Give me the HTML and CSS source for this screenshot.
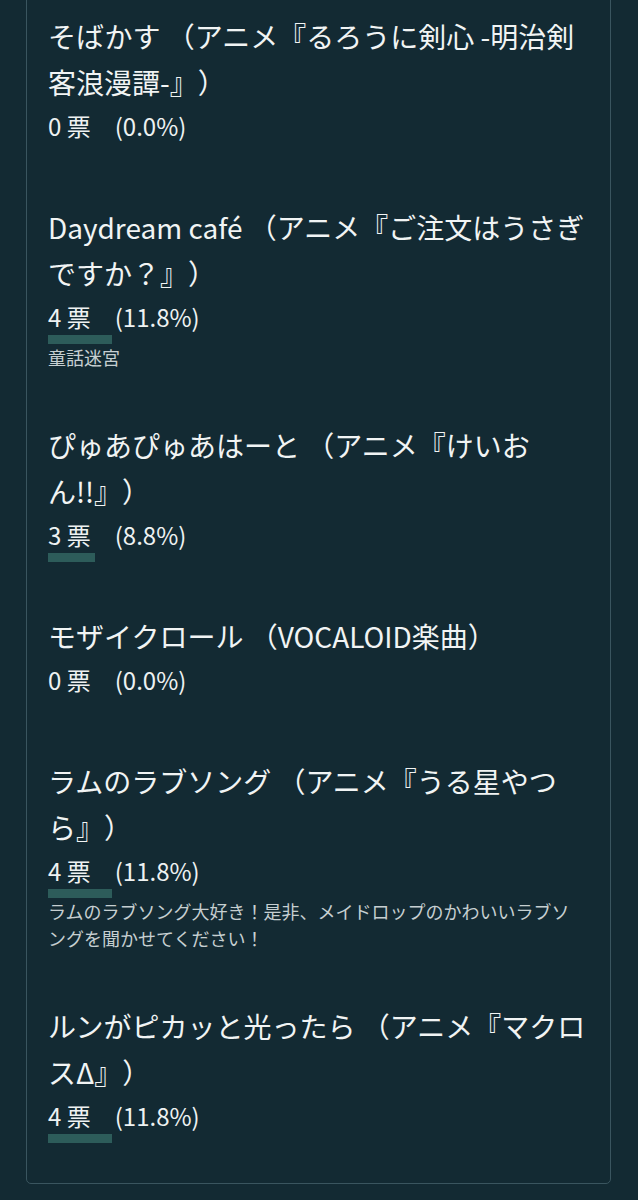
FILE: index.html
```html
<!DOCTYPE html>
<html lang="ja">

<head>
    <meta charset="UTF-8">
    <meta name="viewport" content="width=device-width, initial-scale=1.0">
    <title>投票結果</title>
    <link rel="stylesheet" href="styles.css">
</head>

<body>
    <div class="poll">
        <div class="option">
            <div class="option-title">そばかす （アニメ『るろうに剣心 -明治剣客浪漫譚-』）</div>
            <div class="votes">0 票<span class="pct">(0.0%)</span></div>
            <div class="bar-track"><div class="bar" style="width: 0%"></div></div>
        </div>

        <div class="option">
            <div class="option-title">Daydream café （アニメ『ご注文はうさぎですか？』）</div>
            <div class="votes">4 票<span class="pct">(11.8%)</span></div>
            <div class="bar-track"><div class="bar" style="width: 11.8%"></div></div>
            <p class="comment">童話迷宮</p>
        </div>

        <div class="option">
            <div class="option-title">ぴゅあぴゅあはーと （アニメ『けいおん!!』）</div>
            <div class="votes">3 票<span class="pct">(8.8%)</span></div>
            <div class="bar-track"><div class="bar" style="width: 8.8%"></div></div>
        </div>

        <div class="option">
            <div class="option-title">モザイクロール （VOCALOID楽曲）</div>
            <div class="votes">0 票<span class="pct">(0.0%)</span></div>
            <div class="bar-track"><div class="bar" style="width: 0%"></div></div>
        </div>

        <div class="option">
            <div class="option-title">ラムのラブソング （アニメ『うる星やつら』）</div>
            <div class="votes">4 票<span class="pct">(11.8%)</span></div>
            <div class="bar-track"><div class="bar" style="width: 11.8%"></div></div>
            <p class="comment">ラムのラブソング大好き！是非、メイドロップのかわいいラブソングを聞かせてください！</p>
        </div>

        <div class="option">
            <div class="option-title">ルンがピカッと光ったら （アニメ『マクロスΔ』）</div>
            <div class="votes">4 票<span class="pct">(11.8%)</span></div>
            <div class="bar-track"><div class="bar" style="width: 11.8%"></div></div>
        </div>
    </div>
</body>

</html>
```

FILE: styles.css
```css
body {
    margin: 0;
    padding: 0;
    font-family: "Noto Sans CJK JP", "Noto Sans", sans-serif;
    background: #132a33;
    color: #f1f4f4;
    min-height: 100vh;
    overflow: hidden;
}

/* 結果カード（上端はスクロールで隠れている） */
.poll {
    box-sizing: border-box;
    width: 585px;
    margin: -38px 0 0 26px;
    padding: 50px 23px 40px 21px;
    border: 1px solid #3a555f;
    border-radius: 5px;
    display: flex;
    flex-direction: column;
    gap: 51px;
    /* 括弧は全角幅のまま詰めない */
    text-spacing-trim: space-all;
}

.option-title {
    font-size: 28px;
    line-height: 46px;
}

.votes {
    margin-top: 4px;
    font-size: 24px;
    line-height: 34px;
    color: #eef2f2;
}

.pct {
    margin-left: 24px;
}

.bar-track {
    margin-top: 1px;
    height: 9px;
}

.bar {
    height: 100%;
    background: #2d5c5a;
}

.comment {
    margin: 0;
    font-size: 18px;
    line-height: 27px;
    color: #c6cfd1;
}
```
